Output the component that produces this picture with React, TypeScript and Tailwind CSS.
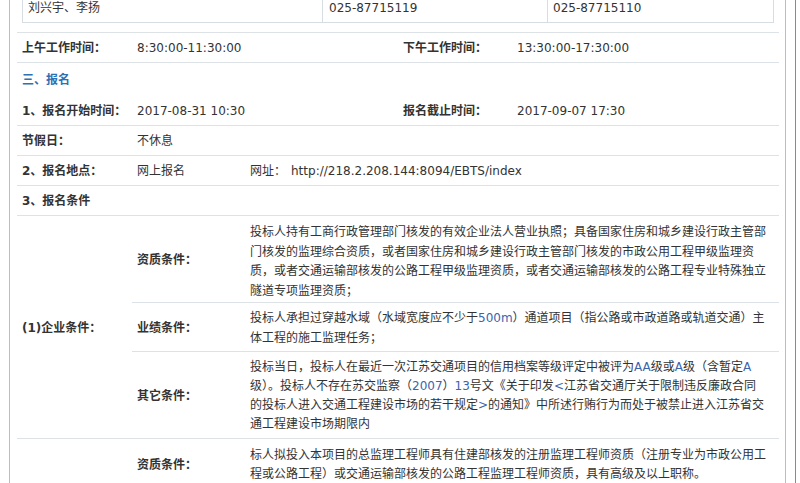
import React from "react";

const B = ({ children }: { children: React.ReactNode }) => (
  <span className="text-[#3b64ad]">{children}</span>
);

const Line = ({ children }: { children: React.ReactNode }) => (
  <div className="whitespace-nowrap">{children}</div>
);

export default function App() {
  return (
    <div className="w-[800px] h-[483px] overflow-hidden bg-white font-['DejaVu_Sans','Noto_Sans_CJK_SC',sans-serif] text-[12px] text-[#333]">
      <div className="w-[796px] h-[483px] border-r border-[#8a8a8a] pl-[9px]">
        <div className="w-[777px] h-[483px] border-l border-r border-[#a9c0ea] pl-[7px] pr-[6px]">
          {/* contact row */}
          <div className="mx-[5px] flex h-[23px] border-l border-r border-b border-[#d6dde3] leading-[17px]">
            <div className="w-[300px] border-r border-[#d6dde3] pl-[5px]">刘兴宇、李扬</div>
            <div className="w-[225px] border-r border-[#d6dde3] pl-[6px]">025-87715119</div>
            <div className="flex-1 pl-[5px]">025-87715110</div>
          </div>

          <div className="mt-[9px] border-t border-[#dde2e6]">
            {/* 上午 / 下午 */}
            <div className="flex h-[30px] items-center border-b border-[#dde2e6]">
              <div className="w-[115px] pl-[5px] font-bold">上午工作时间：</div>
              <div className="w-[266px] pl-[5px]">8:30:00-11:30:00</div>
              <div className="w-[114px] pl-[5px] font-bold">下午工作时间：</div>
              <div className="flex-1 pl-[5px]">13:30:00-17:30:00</div>
            </div>

            {/* 三、报名 */}
            <div className="flex h-[33px] items-center pt-[1px]">
              <div className="pl-[5px] font-bold text-[#2f6fb3]">三、报名</div>
            </div>

            <div className="flex h-[30px] items-center border-b border-[#dde2e6]">
              <div className="w-[115px] pl-[5px] font-bold whitespace-nowrap">1、报名开始时间：</div>
              <div className="w-[266px] pl-[5px]">2017-08-31 10:30</div>
              <div className="w-[114px] pl-[5px] font-bold">报名截止时间：</div>
              <div className="flex-1 pl-[5px]">2017-09-07 17:30</div>
            </div>

            <div className="flex h-[30px] items-center border-b border-[#dde2e6]">
              <div className="w-[115px] pl-[5px] font-bold">节假日：</div>
              <div className="flex-1 pl-[5px]">不休息</div>
            </div>

            <div className="flex h-[30px] items-center border-b border-[#dde2e6]">
              <div className="w-[115px] pl-[5px] font-bold">2、报名地点：</div>
              <div className="w-[113px] pl-[5px]">网上报名</div>
              <div className="flex-1 pl-[5px]">
                网址：<span className="ml-[5px]">http://218.2.208.144:8094/EBTS/index</span>
              </div>
            </div>

            <div className="flex h-[30px] items-center border-b border-[#dde2e6]">
              <div className="pl-[5px] font-bold">3、报名条件</div>
            </div>

            {/* (1)企业条件 */}
            <div className="flex border-b border-[#dde2e6]">
              <div className="flex w-[115px] items-center pl-[5px] pt-[2px] font-bold whitespace-nowrap">(1)企业条件：</div>
              <div className="flex flex-1 flex-col">
                <div className="flex h-[87px] border-b border-[#dde2e6]">
                  <div className="flex w-[113px] items-center pl-[5px] pt-[2px] font-bold">资质条件：</div>
                  <div className="flex-1 pl-[5px] pt-[7px] leading-[19.5px]">
                    <Line>投标人持有工商行政管理部门核发的有效企业法人营业执照；具备国家住房和城乡建设行政主管部</Line>
                    <Line>门核发的监理综合资质，或者国家住房和城乡建设行政主管部门核发的市政公用工程甲级监理资</Line>
                    <Line>质，或者交通运输部核发的公路工程甲级监理资质，或者交通运输部核发的公路工程专业特殊独立</Line>
                    <Line>隧道专项监理资质；</Line>
                  </div>
                </div>
                <div className="flex h-[49px] border-b border-[#dde2e6]">
                  <div className="flex w-[113px] items-center pl-[5px] pt-[1px] font-bold">业绩条件：</div>
                  <div className="flex-1 pl-[5px] pt-[6px] leading-[19.5px]">
                    <Line>
                      投标人承担过穿越水域（水域宽度应不少于<B>500m</B>）通道项目（指公路或市政道路或轨道交通）主
                    </Line>
                    <Line>体工程的施工监理任务；</Line>
                  </div>
                </div>
                <div className="flex h-[86px]">
                  <div className="flex w-[113px] items-center pl-[5px] pt-[2px] font-bold">其它条件：</div>
                  <div className="flex-1 pl-[5px] pt-[6px] leading-[19px]">
                    <Line>
                      投标当日，投标人在最近一次江苏交通项目的信用档案等级评定中被评为<B>AA</B>级或<B>A</B>级（含暂定<B>A</B>
                    </Line>
                    <Line>
                      级）。投标人不存在苏交监察（<B>2007</B>）<B>13</B>号文《关于印发<B>&lt;</B>江苏省交通厅关于限制违反廉政合同
                    </Line>
                    <Line>
                      的投标人进入交通工程建设市场的若干规定<B>&gt;</B>的通知》中所述行贿行为而处于被禁止进入江苏省交
                    </Line>
                    <Line>通工程建设市场期限内</Line>
                  </div>
                </div>
              </div>
            </div>

            {/* next row */}
            <div className="flex">
              <div className="w-[115px] pl-[5px]"></div>
              <div className="flex flex-1 flex-col">
                <div className="flex h-[52px] border-b border-[#dde2e6]">
                  <div className="flex w-[113px] items-center pl-[5px] pt-[1px] font-bold">资质条件：</div>
                  <div className="flex-1 pl-[5px] pt-[7px] leading-[18.5px]">
                    <Line>标人拟投入本项目的总监理工程师具有住建部核发的注册监理工程师资质（注册专业为市政公用工</Line>
                    <Line>程或公路工程）或交通运输部核发的公路工程监理工程师资质，具有高级及以上职称。</Line>
                  </div>
                </div>
              </div>
            </div>
          </div>
        </div>
      </div>
    </div>
  );
}
